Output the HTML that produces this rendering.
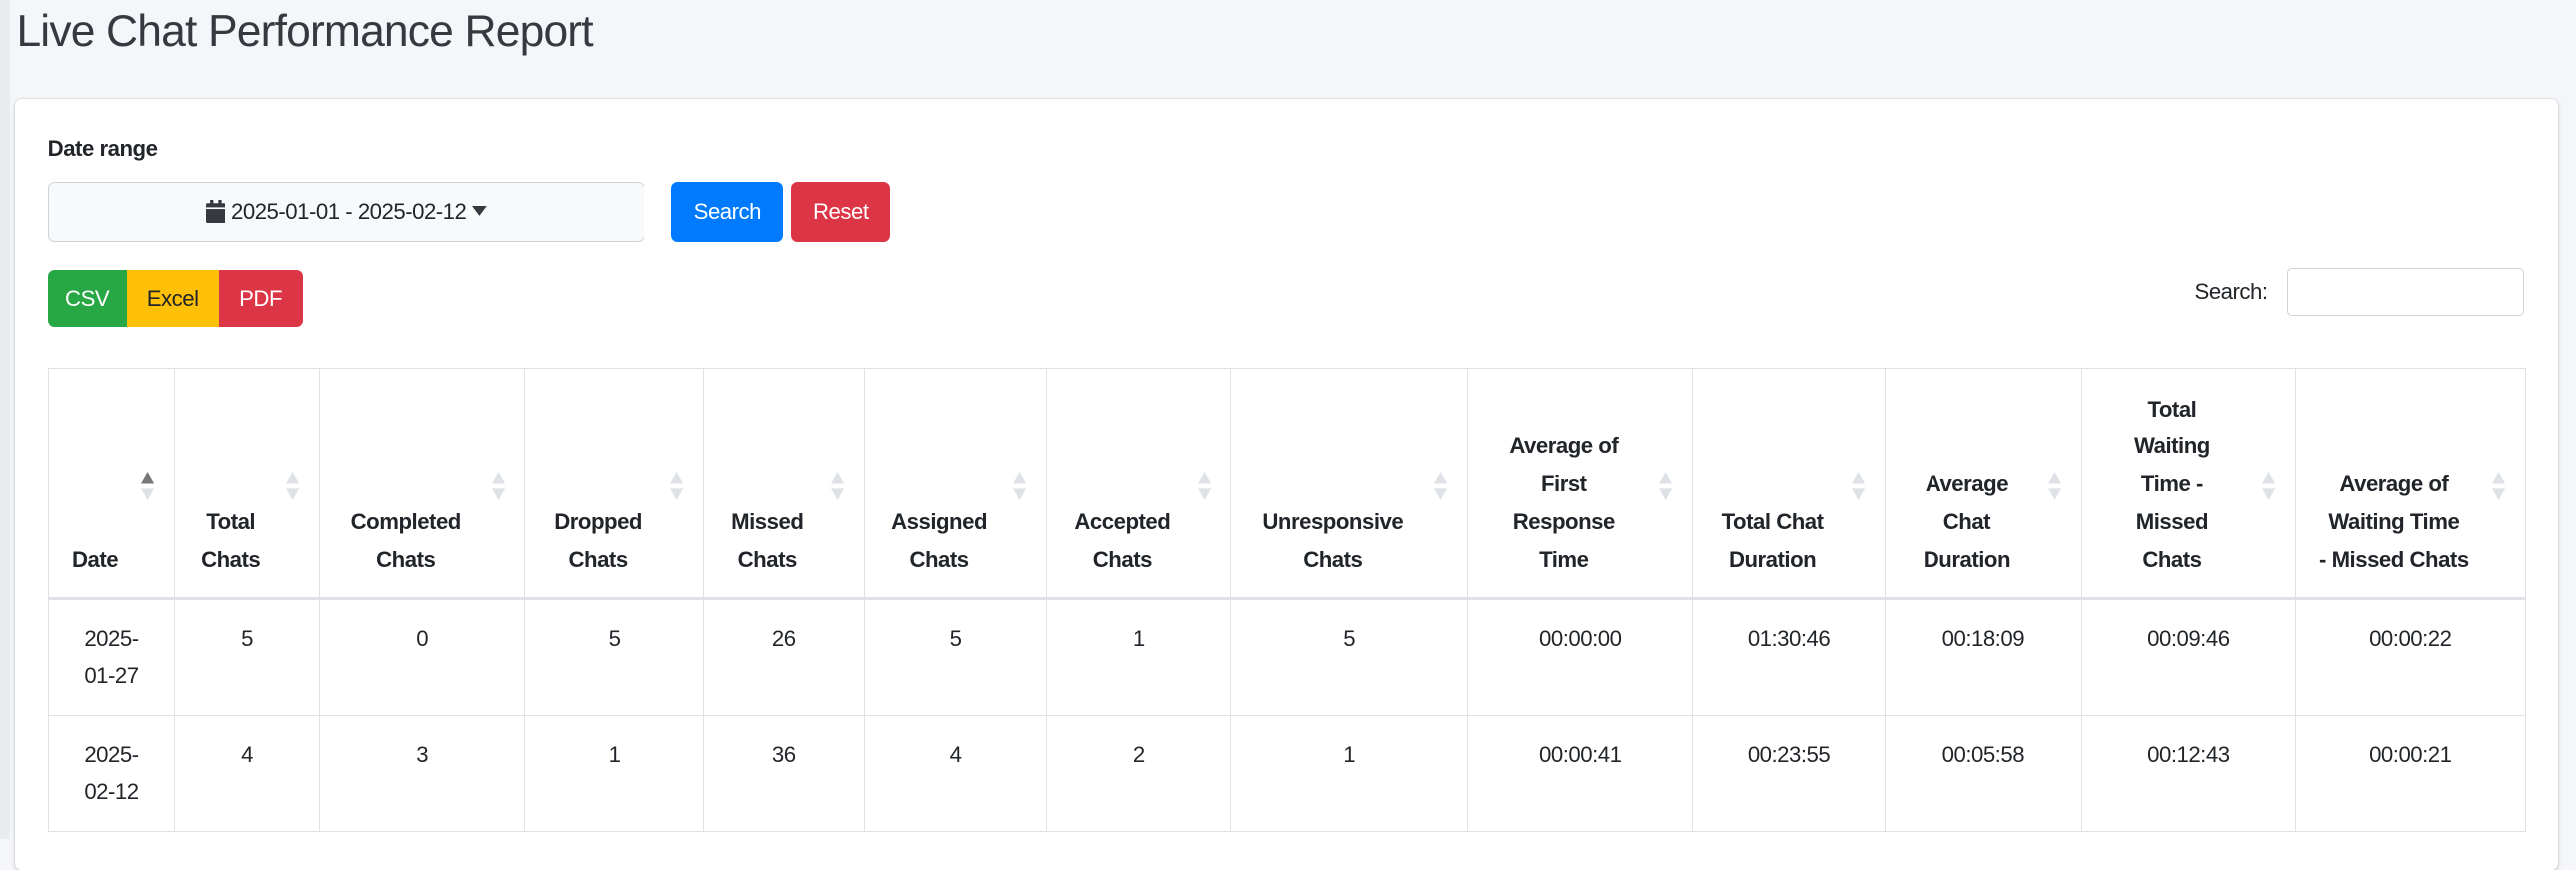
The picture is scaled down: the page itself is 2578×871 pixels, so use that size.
<!DOCTYPE html>
<html><head><meta charset="utf-8"><style>
html,body{margin:0;padding:0;}
body{width:1568px;height:511px;overflow:hidden;background:#f4f6f9;zoom:1.6441;font-family:"Liberation Sans",sans-serif;color:#212529;position:relative;}
.strip{position:absolute;left:0;top:0;width:6px;height:511px;background:#e9ecef;}
h1{position:absolute;left:10px;top:4px;margin:0;font-size:27px;font-weight:normal;color:#343a40;letter-spacing:-0.5px;}
.card{position:absolute;left:9px;top:60px;width:1548px;height:470px;background:#fff;border-radius:4px;box-shadow:0 0 1px rgba(0,0,0,.2),0 1px 3px rgba(0,0,0,.15);}
.lbl{position:absolute;left:29px;top:83px;font-size:13.5px;font-weight:bold;letter-spacing:-0.3px;}
.date{position:absolute;left:29px;top:111px;width:362px;height:35px;background:#f8f9fa;border:1px solid #ced4da;border-radius:4px;font-size:13.5px;line-height:35px;text-align:center;letter-spacing:-0.3px;}
.btn{position:absolute;height:36px;line-height:36px;font-size:13.5px;color:#fff;text-align:center;letter-spacing:-0.3px;}
.srch{position:absolute;left:1336px;top:170px;font-size:13.5px;letter-spacing:-0.3px;}
.inp{position:absolute;left:1392px;top:163px;width:143px;height:28px;border:1px solid #ced4da;border-radius:3px;}
table{position:absolute;left:29px;top:224px;border-collapse:collapse;table-layout:fixed;width:1508px;font-size:13.5px;letter-spacing:-0.3px;}
th,td{border:1px solid #dee2e6;text-align:center;line-height:23px;}
th{vertical-align:bottom;padding:11px 26px 11px 6px;height:117px;position:relative;font-weight:bold;white-space:nowrap;}
thead th{border-bottom:2px solid #dee2e6;}
td{padding:12px 6px;height:46px;vertical-align:top;}
.s{position:absolute;right:12px;top:63px;width:8px;height:17px;}
</style></head><body>
<div class="strip"></div>
<h1>Live Chat Performance Report</h1>
<div class="card"></div>
<div class="lbl">Date range</div>
<div class="date"><svg width="12" height="14" viewBox="0 0 12 14" style="vertical-align:-2px"><rect x="0" y="2" width="12" height="12" rx="1" fill="#343a40"/><rect x="2.5" y="0" width="2" height="4" fill="#343a40"/><rect x="7.5" y="0" width="2" height="4" fill="#343a40"/><rect x="0" y="4.5" width="12" height="1" fill="#f8f9fa"/></svg> 2025-01-01 - 2025-02-12 <svg width="9" height="6" viewBox="0 0 9 6" style="vertical-align:2px"><path d="M0 0H9L4.5 6Z" fill="#343a40"/></svg></div>
<div class="btn" style="left:409px;top:111px;width:68px;background:#007bff;border-radius:4px">Search</div>
<div class="btn" style="left:482px;top:111px;width:60px;background:#dc3545;border-radius:4px">Reset</div>
<div class="btn" style="left:29px;top:164px;width:48px;height:35px;line-height:35px;background:#28a745;border-radius:4px 0 0 4px">CSV</div>
<div class="btn" style="left:77px;top:164px;width:56px;height:35px;line-height:35px;background:#ffc107;color:#212529">Excel</div>
<div class="btn" style="left:133px;top:164px;width:51px;height:35px;line-height:35px;background:#dc3545;border-radius:0 4px 4px 0">PDF</div>
<div class="srch">Search:</div>
<div class="inp"></div>
<table>
<colgroup><col style="width:77px"><col style="width:88px"><col style="width:125px"><col style="width:109px"><col style="width:98px"><col style="width:111px"><col style="width:112px"><col style="width:144px"><col style="width:137px"><col style="width:117px"><col style="width:120px"><col style="width:130px"><col style="width:140px"></colgroup>
<thead><tr>
<th>Date<svg class="s" viewBox="0 0 8 17"><path d="M4 0L8 7H0Z" fill="#777"/><path d="M4 17L8 10H0Z" fill="#dee2e6"/></svg></th>
<th>Total<br>Chats<svg class="s" viewBox="0 0 8 17"><path d="M4 0L8 7H0Z M4 17L8 10H0Z" fill="#dee2e6"/></svg></th>
<th>Completed<br>Chats<svg class="s" viewBox="0 0 8 17"><path d="M4 0L8 7H0Z M4 17L8 10H0Z" fill="#dee2e6"/></svg></th>
<th>Dropped<br>Chats<svg class="s" viewBox="0 0 8 17"><path d="M4 0L8 7H0Z M4 17L8 10H0Z" fill="#dee2e6"/></svg></th>
<th>Missed<br>Chats<svg class="s" viewBox="0 0 8 17"><path d="M4 0L8 7H0Z M4 17L8 10H0Z" fill="#dee2e6"/></svg></th>
<th>Assigned<br>Chats<svg class="s" viewBox="0 0 8 17"><path d="M4 0L8 7H0Z M4 17L8 10H0Z" fill="#dee2e6"/></svg></th>
<th>Accepted<br>Chats<svg class="s" viewBox="0 0 8 17"><path d="M4 0L8 7H0Z M4 17L8 10H0Z" fill="#dee2e6"/></svg></th>
<th>Unresponsive<br>Chats<svg class="s" viewBox="0 0 8 17"><path d="M4 0L8 7H0Z M4 17L8 10H0Z" fill="#dee2e6"/></svg></th>
<th>Average of<br>First<br>Response<br>Time<svg class="s" viewBox="0 0 8 17"><path d="M4 0L8 7H0Z M4 17L8 10H0Z" fill="#dee2e6"/></svg></th>
<th>Total Chat<br>Duration<svg class="s" viewBox="0 0 8 17"><path d="M4 0L8 7H0Z M4 17L8 10H0Z" fill="#dee2e6"/></svg></th>
<th>Average<br>Chat<br>Duration<svg class="s" viewBox="0 0 8 17"><path d="M4 0L8 7H0Z M4 17L8 10H0Z" fill="#dee2e6"/></svg></th>
<th>Total<br>Waiting<br>Time -<br>Missed<br>Chats<svg class="s" viewBox="0 0 8 17"><path d="M4 0L8 7H0Z M4 17L8 10H0Z" fill="#dee2e6"/></svg></th>
<th>Average of<br>Waiting Time<br>- Missed Chats<svg class="s" viewBox="0 0 8 17"><path d="M4 0L8 7H0Z M4 17L8 10H0Z" fill="#dee2e6"/></svg></th>
</tr></thead>
<tbody>
<tr><td>2025-<br>01-27</td><td>5</td><td>0</td><td>5</td><td>26</td><td>5</td><td>1</td><td>5</td><td>00:00:00</td><td>01:30:46</td><td>00:18:09</td><td>00:09:46</td><td>00:00:22</td></tr>
<tr><td>2025-<br>02-12</td><td>4</td><td>3</td><td>1</td><td>36</td><td>4</td><td>2</td><td>1</td><td>00:00:41</td><td>00:23:55</td><td>00:05:58</td><td>00:12:43</td><td>00:00:21</td></tr>
</tbody></table>
</body></html>
